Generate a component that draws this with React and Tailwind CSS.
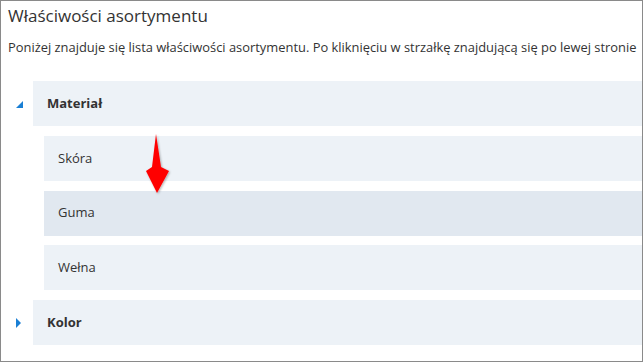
export default function App() {
  const font = { fontFamily: '"Open Sans", "Noto Sans", sans-serif' };
  return (
    <div
      className="relative w-[643px] h-[362px] border border-[#8a8a8a] bg-white overflow-hidden text-[#333333]"
      style={font}
    >
      <div className="pl-[7px] pt-[3px] text-[17px] leading-[24px] whitespace-nowrap">Właściwości asortymentu</div>
      <div className="pl-[7px] mt-[10px] text-[12.9px] leading-[18px] whitespace-nowrap">
        Poniżej znajduje się lista właściwości asortymentu. Po kliknięciu w strzałkę znajdującą się po lewej stronie
      </div>
      <div className="mt-[25px] flex flex-col gap-[9.75px]">
        <div className="flex h-[45px]">
          <div className="w-[32px] flex items-center justify-center">
            <svg width="8" height="8" viewBox="0 0 8 8" className="ml-[6px] mt-[2px]">
              <polygon points="7,0 7,7 0,7" fill="#1a7fd4" />
            </svg>
          </div>
          <div className="flex-1 bg-[#edf2f7] flex items-center pl-[14px] text-[13px] font-bold">Materiał</div>
        </div>
        <div className="ml-[43px] h-[45px] bg-[#edf2f7] flex items-center pl-[14px] text-[13px]">Skóra</div>
        <div className="ml-[43px] h-[45px] bg-[#e1e8f0] flex items-center pl-[14px] text-[13px]">Guma</div>
        <div className="ml-[43px] h-[45px] bg-[#edf2f7] flex items-center pl-[14px] text-[13px]">Wełna</div>
        <div className="flex h-[45px]">
          <div className="w-[32px] flex items-center justify-center">
            <svg width="6" height="10" viewBox="0 0 6 10" className="ml-[4px]">
              <polygon points="0,0 5,5 0,10" fill="#1a7fd4" />
            </svg>
          </div>
          <div className="flex-1 bg-[#edf2f7] flex items-center pl-[14px] text-[13px] font-bold">Kolor</div>
        </div>
      </div>
      <svg
        className="absolute left-[140px] top-[128px]"
        width="34"
        height="70"
        viewBox="0 0 34 70"
      >
        <defs>
          <filter id="sh" x="-50%" y="-50%" width="200%" height="200%">
            <feDropShadow dx="1" dy="1" stdDeviation="1.2" floodColor="#000" floodOpacity="0.3" />
          </filter>
        </defs>
        <polygon
          points="15,5 20,38 28,42 16,64 5,42 11,38"
          fill="#ff0000"
          filter="url(#sh)"
        />
      </svg>
    </div>
  );
}
